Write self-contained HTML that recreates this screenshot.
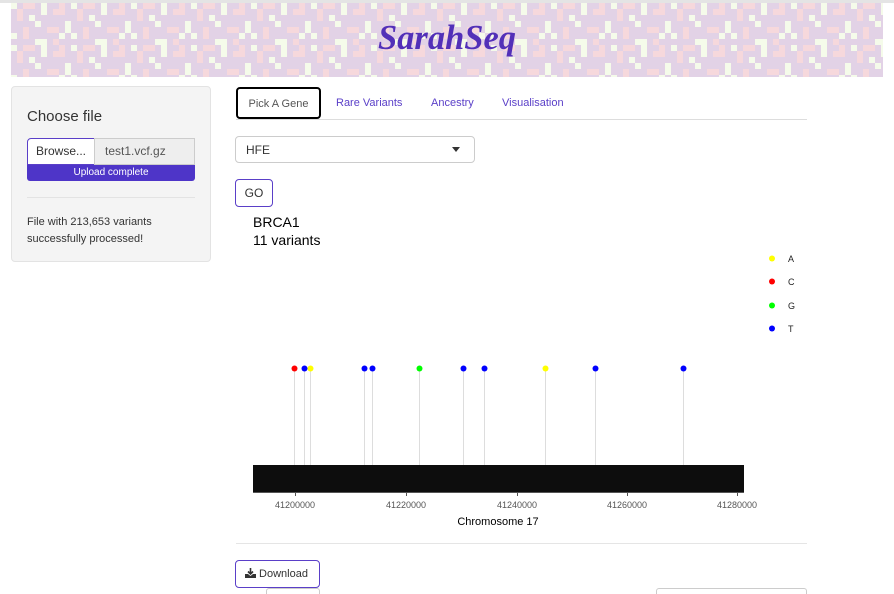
<!DOCTYPE html>
<html><head><meta charset="utf-8"><style>
*{box-sizing:border-box}
body{margin:0;width:894px;height:592px;overflow:hidden;background:#fff;font-family:"Liberation Sans",sans-serif;color:#333;position:relative}
.a{position:absolute}
</style></head><body>
<div class="a" style="left:0;top:0;width:894px;height:3px;background:#e4e4e4"></div>
<svg class="a" style="left:11px;top:3px" width="872" height="74">
<defs><pattern id="p" width="60" height="42" patternUnits="userSpaceOnUse">
<rect width="60" height="42" fill="#e2d2e6"/>
<rect x="0" y="0" width="6" height="6" fill="#f5fbea"/><rect x="12" y="0" width="12" height="6" fill="#f6d8dc"/><rect x="30" y="0" width="6" height="12" fill="#f5fbea"/><rect x="48" y="0" width="6" height="6" fill="#f6d8dc"/>
<rect x="6" y="6" width="6" height="12" fill="#f6d8dc"/><rect x="18" y="12" width="6" height="6" fill="#f5fbea"/><rect x="42" y="6" width="12" height="6" fill="#f6d8dc"/>
<rect x="24" y="18" width="6" height="6" fill="#f5fbea"/><rect x="12" y="24" width="6" height="12" fill="#f6d8dc"/><rect x="54" y="18" width="6" height="12" fill="#f5fbea"/>
<rect x="0" y="30" width="6" height="6" fill="#f5fbea"/><rect x="36" y="24" width="12" height="6" fill="#f6d8dc"/><rect x="24" y="36" width="12" height="6" fill="#f5fbea"/><rect x="42" y="36" width="6" height="6" fill="#f6d8dc"/><rect x="48" y="30" width="6" height="6" fill="#f5fbea"/>
</pattern></defs>
<rect width="872" height="74" fill="url(#p)"/>
<text x="436" y="46" text-anchor="middle" font-family="Liberation Serif,serif" font-style="italic" font-weight="bold" font-size="35" fill="#5230b8" textLength="138" lengthAdjust="spacingAndGlyphs">SarahSeq</text>
</svg>

<div class="a" style="left:11px;top:86px;width:200px;height:176px;background:#f4f4f4;border:1px solid #e3e3e3;border-radius:4px"></div>
<div class="a" style="left:27px;top:108px;font-size:15px">Choose file</div>
<div class="a" style="left:27px;top:138px;width:68px;height:27px;border:1px solid #5a3fc8;border-radius:4px 0 0 0;background:#fff;font-size:12px;line-height:25px;text-align:center">Browse...</div>
<div class="a" style="left:94px;top:138px;width:101px;height:27px;border:1px solid #ccc;background:#eee;font-size:12px;line-height:25px;padding-left:10px;color:#555">test1.vcf.gz</div>
<div class="a" style="left:27px;top:165px;width:168px;height:16px;background:#4e35c8;border-radius:0 0 3px 3px;color:#fff;font-size:10px;line-height:16px;text-align:center">Upload complete</div>
<div class="a" style="left:27px;top:197px;width:168px;height:1px;background:#e3e3e3"></div>
<div class="a" style="left:27px;top:214px;font-size:11px;line-height:17px">File with 213,653 variants<br>successfully processed!</div>

<div class="a" style="left:236px;top:119px;width:571px;height:1px;background:#ddd"></div>
<div class="a" style="left:236px;top:87px;width:85px;height:32px;border:2px solid #000;border-radius:4px;background:#fff;font-size:11px;line-height:30px;text-align:center;color:#555">Pick A Gene</div>
<div class="a" style="left:336px;top:97px;font-size:11px;color:#5a3fc8">Rare Variants</div>
<div class="a" style="left:431px;top:97px;font-size:11px;color:#5a3fc8">Ancestry</div>
<div class="a" style="left:502px;top:97px;font-size:11px;color:#5a3fc8">Visualisation</div>
<div class="a" style="left:235px;top:136px;width:240px;height:27px;border:1px solid #ccc;border-radius:4px;font-size:12px;line-height:27px;padding-left:10px">HFE</div>
<div class="a" style="left:452px;top:147px;border-left:4px solid transparent;border-right:4px solid transparent;border-top:5px solid #333"></div>
<div class="a" style="left:235px;top:179px;width:38px;height:28px;border:1px solid #5a3fc8;border-radius:4px;font-size:12px;line-height:27px;text-align:center">GO</div>
<div class="a" style="left:253px;top:213px;font-size:14px;line-height:18px;color:#000">BRCA1<br>11 variants</div>

<svg class="a" style="left:0;top:0" width="894" height="592">
<g stroke="#ddd" stroke-width="1">
<line x1="294.5" y1="368" x2="294.5" y2="465"/><line x1="304.5" y1="368" x2="304.5" y2="465"/><line x1="310.5" y1="368" x2="310.5" y2="465"/><line x1="364.5" y1="368" x2="364.5" y2="465"/><line x1="372.5" y1="368" x2="372.5" y2="465"/><line x1="419.5" y1="368" x2="419.5" y2="465"/><line x1="463.5" y1="368" x2="463.5" y2="465"/><line x1="484.5" y1="368" x2="484.5" y2="465"/><line x1="545.5" y1="368" x2="545.5" y2="465"/><line x1="595.5" y1="368" x2="595.5" y2="465"/><line x1="683.5" y1="368" x2="683.5" y2="465"/>
</g>
<circle cx="294.5" cy="368.5" r="3" fill="#f00"/><circle cx="304.5" cy="368.5" r="3" fill="#00f"/><circle cx="310.5" cy="368.5" r="3" fill="#ff0"/><circle cx="364.5" cy="368.5" r="3" fill="#00f"/><circle cx="372.5" cy="368.5" r="3" fill="#00f"/><circle cx="419.5" cy="368.5" r="3" fill="#0f0"/><circle cx="463.5" cy="368.5" r="3" fill="#00f"/><circle cx="484.5" cy="368.5" r="3" fill="#00f"/><circle cx="545.5" cy="368.5" r="3" fill="#ff0"/><circle cx="595.5" cy="368.5" r="3" fill="#00f"/><circle cx="683.5" cy="368.5" r="3" fill="#00f"/>
<rect x="253" y="465" width="491" height="27" fill="#0d0d0d"/>
<line x1="253" y1="492.5" x2="744" y2="492.5" stroke="#555"/>
<g stroke="#555"><line x1="295.5" y1="492" x2="295.5" y2="496"/><line x1="406.5" y1="492" x2="406.5" y2="496"/><line x1="517.5" y1="492" x2="517.5" y2="496"/><line x1="627.5" y1="492" x2="627.5" y2="496"/><line x1="737.5" y1="492" x2="737.5" y2="496"/></g>
<g font-family="Liberation Sans,sans-serif" font-size="9" fill="#555" text-anchor="middle"><text x="295" y="508">41200000</text><text x="406" y="508">41220000</text><text x="517" y="508">41240000</text><text x="627" y="508">41260000</text><text x="737" y="508">41280000</text></g>
<text x="498" y="525" font-family="Liberation Sans,sans-serif" font-size="11" fill="#000" text-anchor="middle">Chromosome 17</text>
<circle cx="772" cy="258.5" r="3" fill="#ff0"/><circle cx="772" cy="281.5" r="3" fill="#f00"/><circle cx="772" cy="305.5" r="3" fill="#0f0"/><circle cx="772" cy="328.5" r="3" fill="#00f"/>
<g font-family="Liberation Sans,sans-serif" font-size="9" fill="#222"><text x="788" y="262">A</text><text x="788" y="285">C</text><text x="788" y="309">G</text><text x="788" y="332">T</text></g>
</svg>

<div class="a" style="left:236px;top:543px;width:571px;height:1px;background:#e5e5e5"></div>
<div class="a" style="left:235px;top:560px;width:85px;height:28px;border:1px solid #5a3fc8;border-radius:4px;font-size:11px;line-height:27px;padding-left:9px;color:#333">
<svg width="11" height="10" viewBox="0 0 11 10" style="vertical-align:-1px"><path d="M5.5 0v6M3 3.5l2.5 2.5 2.5-2.5" stroke="#333" stroke-width="1.6" fill="none"/><path d="M0 6h3l2.5 2 2.5-2h3v4H0z" fill="#333"/></svg> Download</div>
<div class="a" style="left:266px;top:588px;width:54px;height:6px;border:1px solid #ccc;border-bottom:none;border-radius:3px 3px 0 0"></div>
<div class="a" style="left:656px;top:588px;width:151px;height:6px;border:1px solid #ccc;border-bottom:none;border-radius:3px 3px 0 0"></div>
</body></html>
